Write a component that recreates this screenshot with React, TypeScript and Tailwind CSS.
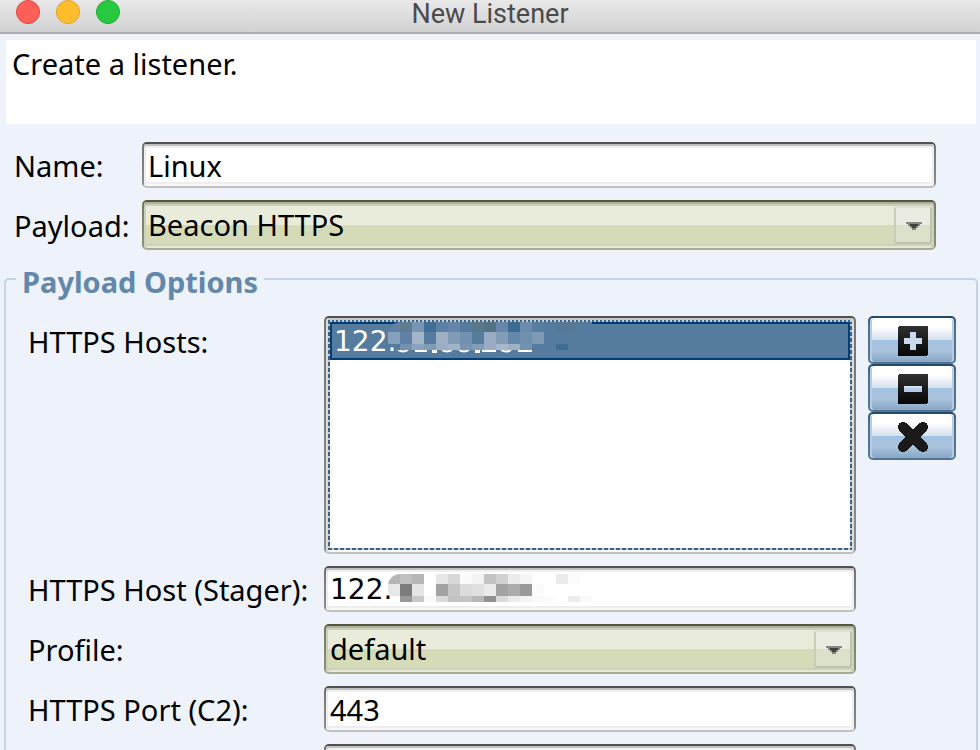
import { useState } from "react";
import type { ReactNode } from "react";

const uiFont = "font-['Noto_Sans',sans-serif]";
const digitFont = "font-['DejaVu_Sans',sans-serif]";

function FieldFrame({ children }: { children?: ReactNode }) {
  return (
    <div className="relative min-w-0 flex-1 rounded-[5px] bg-[linear-gradient(#505050_2px,#757575_4px,#8c8c8c_calc(100%-4px),#c0c0c0_calc(100%-2px))] p-0.5">
      <div className="h-[42px] overflow-hidden rounded-[3px] bg-white shadow-[inset_0_2px_#c0c0c0,inset_0_4px_#f0f0f0,inset_2px_0_#eeeeee,inset_-2px_0_#eeeeee,inset_0_-2px_#fafafa,inset_0_-4px_#eeeeee]">
        {children}
      </div>
    </div>
  );
}

function TextField({ id, value, digits = false, label, children }: { id: string; value: string; digits?: boolean; label?: string; children?: ReactNode }) {
  const [text, setText] = useState(value);
  return (
    <FieldFrame>
      <input
        id={id}
        aria-label={label}
        value={text}
        onChange={(e) => setText(e.target.value)}
        className={`h-full w-full bg-transparent px-1 text-black outline-none ${digits ? `text-[28px] ${digitFont}` : `text-[29px] ${uiFont}`}`}
      />
      {children}
    </FieldFrame>
  );
}

function Dropdown({ id, options }: { id: string; options: string[] }) {
  return (
    <div className="relative min-w-0 flex-1 rounded-[5px] bg-[linear-gradient(#55573f_2px,#777a60_4px,#8c9076_calc(100%-4px),#a9ad94_calc(100%-2px))] p-0.5">
      <select
        id={id}
        className={`block h-[46px] w-full appearance-none rounded-[3px] bg-[linear-gradient(#e9ecdb_50%,#d4dbb6_50%)] px-1 text-[29px] text-black shadow-[inset_0_2px_#adb19a,inset_0_4px_#cdd1bb,inset_2px_0_#cdd1bb,inset_-2px_0_#cdd1bb,inset_0_-2px_#e6e9d5,inset_0_-4px_#cdd1bb] outline-none ${uiFont}`}
      >
        {options.map((o) => (
          <option key={o}>{o}</option>
        ))}
      </select>
      <span className="pointer-events-none absolute inset-y-1.5 right-1 flex w-[38px] items-center justify-center rounded-[3px] border-2 border-[#c9cdb8] border-t-[#dfe2d2] border-r-[#bfc3ae] border-b-[#bfc3ae] bg-[linear-gradient(#eaece2_50%,#dce1c9_50%)] pt-0.5 pl-0.5">
        <svg width="16" height="8" viewBox="0 0 16 8" shapeRendering="crispEdges" aria-hidden="true">
          <path d="M0 0h16v2h-2v2h-2v2h-2v2H6V6H4V4H2V2H0z" fill="#858585" />
          <path d="M4 2h8v2h-2v2H6V4H4z" fill="#404040" />
        </svg>
      </span>
    </div>
  );
}

function Label({ htmlFor, wide = false, children }: { htmlFor: string; wide?: boolean; children: ReactNode }) {
  return (
    <label htmlFor={htmlFor} className={`shrink-0 pt-0.5 whitespace-nowrap ${wide ? "w-[296px]" : "w-32"}`}>
      {children}
    </label>
  );
}

function Mosaic({ rows, className }: { rows: string[][]; className: string }) {
  const tops = [0, 10, 22];
  const heights = [10, 12, 6];
  return (
    <svg width="204" height="28" viewBox="0 0 204 28" shapeRendering="crispEdges" aria-hidden="true" className={className}>
      {rows.map((row, r) =>
        row.map((c, i) => (c ? <rect key={`${r}-${i}`} x={i * 12} y={tops[r]} width="12" height={heights[r]} fill={c} /> : null)),
      )}
    </svg>
  );
}

const hostMosaic = [
  ["#5f80a2", "#5f7d90", "#7896b3", "#3f7093", "#5b7fa5", "#6485a8", "#557b9f", "#587889", "#547382", "#6687a7", "#3c6b93", "#6c8cad", "#587d9f", "#557b9f", "#56799a", "#587a97", "#557b9f"],
  ["#85a0bc", "#6081a5", "#a4b5c9", "#557ba0", "#9db0c5", "#7f9bb6", "#7290af", "#557b9f", "#98adc3", "#819cb7", "#6587aa", "#6f8fae", "#7f9ab5"],
  ["", "#7591b0", "#8ba4be", "#7f9bb6", "#9aafc4", "#a0b3c7", "#7894b2", "#829db8", "#98adc3", "#a8b8ca", "#9db0c5", "#7391b0", "", "", "#3c6b93"],
];

const stagerMosaic = [
  ["#b5b5b5", "#c0c0c0", "#b6b6b6", "#ffffff", "#e7e7e7", "#d8d8d8", "#fbfbfb", "#f3f3f3", "#c3c3c3", "#d1d1d1", "#ececec", "#f5f5f5", "#ffffff", "#ffffff", "#ebebeb", "#fcfcfc"],
  ["#e8e8e8", "#7c7c7c", "#e5e5e5", "#ffffff", "#a2a2a2", "#c6c6c6", "#dcdcdc", "#e1e1e1", "#ebebeb", "#a3a3a3", "#acacac", "#999999", "#fbfbfb", "#ffffff", "#ffffff", "#ffffff"],
  ["", "#999999", "#c8c8c8", "#fafafa", "#dadada", "#c3c3c3", "#c4c4c4", "#b8b8b8", "#929292", "#dadada", "#ebebeb", "#f4f4f4", "#f8f8f8", "#fbfbfb", "#ffffff", "#ebebeb", "#fafafa"],
];

function ToolButton({ label, children }: { label: string; children: ReactNode }) {
  return (
    <button
      type="button"
      aria-label={label}
      className="h-12 w-[88px] rounded-[5px] bg-[linear-gradient(#23496b_2px,#49708f_8px,#56789a_calc(100%-4px),#4e7296)] p-0.5"
    >
      <span className="flex h-full items-center justify-center rounded-[3px] bg-[linear-gradient(#ffffff_20%,#d5e1ee_50%,#a1bfe0_50%,#aac4dc_75%,#86a5c6)] pt-0.5 pl-0.5 shadow-[inset_2px_0_#b9cde1,inset_-2px_0_#b9cde1]">
        <svg width="30" height="30" viewBox="0 0 30 30" shapeRendering="crispEdges" aria-hidden="true">
          <defs>
            <linearGradient id="toolInk" x1="0" y1="0" x2="0" y2="1">
              <stop offset="0" stopColor="#303030" />
              <stop offset="1" stopColor="#060606" />
            </linearGradient>
          </defs>
          {children}
        </svg>
      </span>
    </button>
  );
}

export default function App() {
  return (
    <div className={`flex h-screen flex-col overflow-hidden bg-[#eef3fb] text-[29px] leading-9 text-black ${uiFont}`}>
      <header className="relative h-[34px] shrink-0 border-b-2 border-[#aeaeb2] bg-[linear-gradient(#e8e8e8,#d2d2d2)]">
        <div className="absolute top-0 left-4 flex gap-4">
          <button type="button" aria-label="Close" className="size-6 rounded-full border border-[#e2463f] bg-[#ff5f57]" />
          <button type="button" aria-label="Minimize" className="size-6 rounded-full border border-[#dfa023] bg-[#ffbd2e]" />
          <button type="button" aria-label="Zoom" className="size-6 rounded-full border border-[#1dad2b] bg-[#28c940]" />
        </div>
        <h1 className="text-center font-['Roboto',sans-serif] text-[27px] leading-7 text-[#4b4b4b]">New Listener</h1>
      </header>

      <p className="mt-1.5 mr-1 ml-1.5 h-[84px] shrink-0 bg-white px-1.5 py-1.5">Create a listener.</p>

      <div className="mt-[18px] mr-11 ml-3.5 flex shrink-0 flex-col gap-3">
        <div className="flex items-center">
          <Label htmlFor="name">Name:</Label>
          <TextField id="name" value="Linux" />
        </div>
        <div className="flex items-center">
          <Label htmlFor="payload">Payload:</Label>
          <Dropdown id="payload" options={["Beacon HTTPS"]} />
        </div>
      </div>

      <fieldset className="mt-2 mr-0.5 ml-1 min-w-0 shrink-0 rounded-[5px] border-2 border-[#c2d4e6] pr-5 pl-[22px]">
        <legend className="-ml-3 px-1.5 pt-1.5 text-[29px] leading-9 font-bold text-[#6288ab]">Payload Options</legend>
        <div className="mt-4 flex flex-col gap-3">
          <div className="flex items-start">
            <span id="hosts-label" className="w-[296px] shrink-0 pt-2">
              HTTPS Hosts:
            </span>
            <div className="min-w-0 flex-1 rounded-[5px] bg-[linear-gradient(#505050_2px,#757575_4px,#8c8c8c_calc(100%-4px),#c0c0c0_calc(100%-2px))] p-0.5">
              <div className="h-[234px] rounded-[3px] bg-white p-0.5 shadow-[inset_0_2px_#c8c8c8,inset_2px_0_#dcdcdc,inset_-2px_0_#dcdcdc]">
                <ul
                  role="listbox"
                  aria-labelledby="hosts-label"
                  className="h-full p-0.5 [background:repeating-linear-gradient(90deg,#3c6488_0_2px,#c3cdd8_2px_4px)_top/100%_2px_no-repeat,repeating-linear-gradient(90deg,#3c6488_0_4px,#c3cdd8_4px_6px)_bottom/100%_2px_no-repeat,repeating-linear-gradient(#3c6488_0_4px,#c3cdd8_4px_6px)_left/2px_100%_no-repeat,repeating-linear-gradient(#3c6488_0_4px,#c3cdd8_4px_6px)_right/2px_100%_no-repeat]"
                >
                  <li
                    role="option"
                    aria-selected="true"
                    className={`relative h-[38px] border-2 border-[#003e75] bg-[#557b9f] pl-0.5 text-[28px] leading-9 text-white ${digitFont}`}
                  >
                    122.
                    <Mosaic rows={hostMosaic} className="absolute -top-0.5 left-14 rounded-tl-xl" />
                    <svg width="140" height="3" viewBox="0 0 140 3" aria-hidden="true" className="absolute top-[26px] left-16">
                      <path d="M2 0q5 3 10 0M19 1h12M37 0h3v2h-3zM46 0q5 3 10 0M63 0q5 3 10 0M80 0h3v2h-3zM86 1h14M105 0q5 3 10 0M122 1h14" fill="none" stroke="#fff" strokeWidth="2" />
                    </svg>
                  </li>
                </ul>
              </div>
            </div>
            <div className="ml-3 flex flex-col">
              <ToolButton label="Add host">
                <rect width="30" height="30" rx="2" fill="url(#toolInk)" />
                <path d="M12 6h6v6h6v6h-6v6h-6v-6H6v-6h6z" fill="#c9daec" />
              </ToolButton>
              <ToolButton label="Remove host">
                <rect width="30" height="30" rx="2" fill="url(#toolInk)" />
                <path d="M6 12h18v6H6z" fill="#b4cbe5" />
                <path d="M6 12h18v2H6z" fill="#d3e0ee" />
              </ToolButton>
              <ToolButton label="Clear hosts">
                <path d="M5 5l20 20M25 5L5 25" fill="none" stroke="#1a1a1a" strokeWidth="10" strokeLinecap="round" />
              </ToolButton>
            </div>
          </div>

          <div className="mr-[100px] flex items-center">
            <Label htmlFor="stager" wide>
              HTTPS Host (Stager):
            </Label>
            <TextField id="stager" value="122." digits>
              <Mosaic rows={stagerMosaic} className="absolute top-2 left-16 rounded-l-xl" />
            </TextField>
          </div>
          <div className="mr-[100px] flex items-center">
            <Label htmlFor="profile" wide>
              Profile:
            </Label>
            <Dropdown id="profile" options={["default"]} />
          </div>
          <div className="mr-[100px] flex items-center">
            <Label htmlFor="port" wide>
              HTTPS Port (C2):
            </Label>
            <TextField id="port" value="443" />
          </div>
          <div className="mr-[100px] flex pl-[296px]">
            <TextField id="bind" value="" label="Bind port" />
          </div>
        </div>
      </fieldset>
    </div>
  );
}
